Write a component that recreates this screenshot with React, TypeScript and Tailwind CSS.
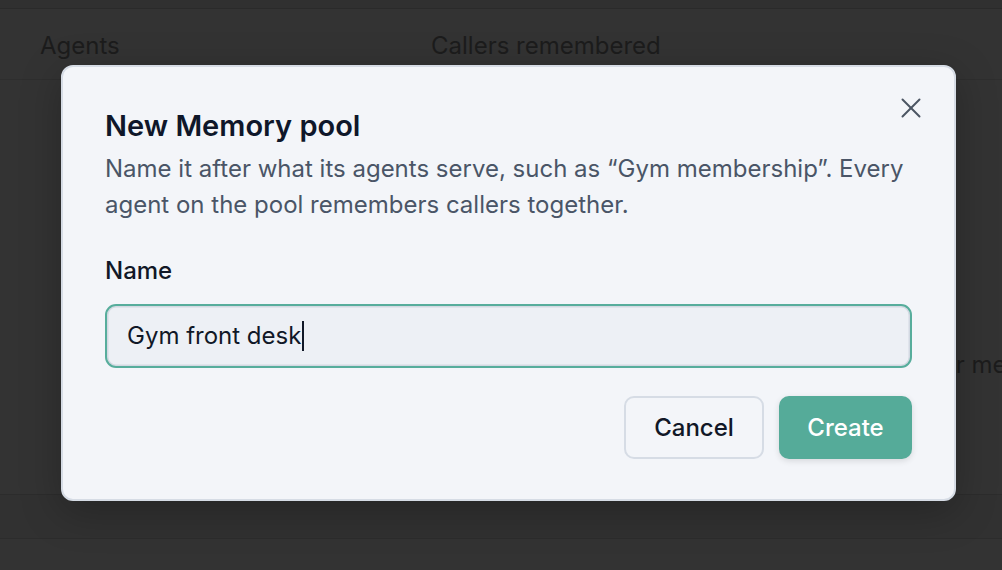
import { X } from "lucide-react";

function Backdrop() {
  return (
    <div className="flex h-[570px] w-full flex-col overflow-hidden bg-[#333333] text-[24px] text-[#1c1c1c]">
      <div className="h-[9px] shrink-0 border-b border-[#2a2a2a] bg-[#303030]" />
      <div className="flex h-[71px] shrink-0 items-center border-b border-[#2e2e2e] pl-[40px] pt-[4px]">
        <span className="w-[391px]">Agents</span>
        <span>Callers remembered</span>
      </div>
      <div className="h-[414px] shrink-0 pl-[899px] pt-[267px]">
        <span className="whitespace-nowrap">Caller memory</span>
      </div>
      <div className="h-[45px] shrink-0 border-y border-[#2c2c2c] bg-[#313131]" />
      <div className="flex-1" />
    </div>
  );
}

export default function App() {
  return (
    <div className="relative h-[570px] w-full overflow-hidden font-['Inter','Liberation_Sans',sans-serif]">
      <Backdrop />

      <div className="absolute left-[61px] top-[65px] w-[895px] rounded-[12px] border-2 border-[#d6dce5] bg-[#f3f5f9] px-[42px] pb-[40px] pt-[40px] shadow-[0_10px_40px_rgba(0,0,0,0.25)]">
        <button className="absolute right-[26px] top-[24px] text-[#4b5563]">
          <X className="h-[34px] w-[34px]" strokeWidth={1.4} />
        </button>

        <h2 className="text-[29px] font-semibold leading-[38px] text-[#0f172a]">New Memory pool</h2>
        <p className="mt-[6px] text-[24px] leading-[36px] text-[#4a5567]">
          Name it after what its agents serve, such as “Gym membership”. Every agent on the pool remembers callers together.
        </p>

        <div className="mt-[32px] text-[24px] font-medium leading-[32px] text-[#111827]">Name</div>
        <div className="mt-[17px] flex h-[64px] items-center rounded-[11px] border-2 border-[#57ad9c] bg-[#edf0f5] px-[20px] shadow-[inset_0_0_0_1.5px_#d3d9e2]">
          <span className="text-[24px] text-[#111827]">Gym front desk</span>
          <span className="ml-[1px] h-[30px] w-[2px] bg-[#111827]" />
        </div>

        <div className="mt-[28px] flex justify-end gap-[15px]">
          <button className="h-[63px] w-[140px] rounded-[10px] border-2 border-[#d6dce5] bg-[#f3f5f9] text-[24px] font-medium text-[#111827]">
            Cancel
          </button>
          <button className="h-[63px] w-[133px] rounded-[10px] bg-[#55ab99] text-[24px] font-medium text-white shadow-[0_2px_6px_rgba(0,0,0,0.12)]">
            Create
          </button>
        </div>
      </div>
    </div>
  );
}
